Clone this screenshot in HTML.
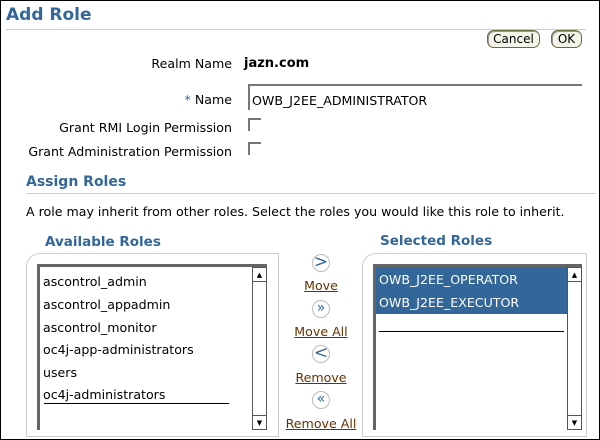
<!DOCTYPE html>
<html><head><style>
*{margin:0;padding:0;box-sizing:border-box}
body{width:600px;height:440px;overflow:hidden;background:#fff;font-family:"DejaVu Sans",sans-serif;font-size:12.6px;color:#000;position:relative}
.frame{position:absolute;left:0;top:0;width:600px;height:440px;border:1px solid #000}
.a{position:absolute;white-space:nowrap}
.h{color:#336699;font-weight:bold}
.lbl{position:absolute;right:368px;white-space:nowrap}
.btn{position:absolute;top:30px;height:18px;border:1px solid #6b6b3a;border-radius:7px;background:#f4f4ea;font-size:12px;line-height:16px;text-align:center;box-shadow:1px 1px 0 #999 inset}
.cb{position:absolute;left:248px;width:13px;height:13px;border-top:2px solid #777;border-left:2px solid #777}
.box{position:absolute;top:253px;height:184px;border:1px solid #ccc;border-top-left-radius:14px}
.lb{position:absolute;top:264px;height:166px;border-top:3px solid #666;border-left:3px solid #666;background:#fff}
.sb{position:absolute;top:0;right:0;width:15px;height:163px;border:1px solid #555;background:#fff}
.sb .u,.sb .d{position:absolute;left:0;width:13px;height:14px;font-size:7px;text-align:center;line-height:14px}
.sb .u{top:0;border-bottom:1px solid #555}
.sb .d{bottom:0;border-top:1px solid #555}
.it{position:absolute;left:3px}
.ic{position:absolute;left:312px;width:18px;height:18px;border:1px solid #bbb;border-radius:50%;color:#336699;font-size:17px;line-height:15px;text-align:center;background:#fff}
.lk{position:absolute;color:#663300;text-decoration:underline;width:100px;left:271px;text-align:center}
</style></head><body>
<div class="frame"></div>
<div class="a h" style="left:6px;top:5px;font-size:17px">Add Role</div>
<div class="a" style="left:6px;top:29px;width:580px;height:1px;background:#ccc"></div>
<div class="btn" style="left:487px;width:53px">Cancel</div>
<div class="btn" style="left:551px;width:31px">OK</div>
<div class="lbl" style="top:56px">Realm Name</div>
<div class="a" style="left:244px;top:56px;font-weight:bold;font-size:13px">jazn.com</div>
<div class="lbl" style="top:92px"><span style="color:#336699">*</span> Name</div>
<div class="a" style="left:248px;top:84px;width:334px;height:26px;border-top:2px solid #777;border-left:2px solid #777;padding:7px 0 0 2px">OWB_J2EE_ADMINISTRATOR</div>
<div class="lbl" style="top:120px">Grant RMI Login Permission</div>
<div class="cb" style="top:118px"></div>
<div class="lbl" style="top:144px">Grant Administration Permission</div>
<div class="cb" style="top:142px"></div>
<div class="a h" style="left:26px;top:174px;font-size:14px">Assign Roles</div>
<div class="a" style="left:26px;top:193px;width:570px;height:1px;background:#ccc"></div>
<div class="a" style="left:26px;top:204px">A role may inherit from other roles. Select the roles you would like this role to inherit.</div>
<div class="a h" style="left:45px;top:234px;font-size:13.5px">Available Roles</div>
<div class="a h" style="left:380px;top:233px;font-size:13.5px">Selected Roles</div>
<div class="box" style="left:26px;width:253px"></div>
<div class="lb" style="left:37px;width:230px">
<div class="it" style="top:7px">ascontrol_admin</div>
<div class="it" style="top:30px">ascontrol_appadmin</div>
<div class="it" style="top:53px">ascontrol_monitor</div>
<div class="it" style="top:75px">oc4j-app-administrators</div>
<div class="it" style="top:98px">users</div>
<div class="it" style="top:120px">oc4j-administrators</div>
<div class="a" style="left:4px;top:136px;width:185px;height:1px;background:#000"></div>
<div class="sb"><div class="u">▲</div><div class="d">▼</div></div>
</div>
<div class="box" style="left:362px;width:225px"></div>
<div class="lb" style="left:373px;width:209px">
<div class="a" style="left:0;top:0;width:191px;height:47px;background:#336699"></div>
<div class="it" style="top:5px;color:#fff">OWB_J2EE_OPERATOR</div>
<div class="it" style="top:28px;color:#fff">OWB_J2EE_EXECUTOR</div>
<div class="a" style="left:3px;top:64px;width:185px;height:1px;background:#000"></div>
<div class="sb"><div class="u">▲</div><div class="d">▼</div></div>
</div>
<div class="ic" style="top:254px">&gt;</div>
<div class="lk" style="top:278px">Move</div>
<div class="ic" style="top:300px;font-size:14px">&raquo;</div>
<div class="lk" style="top:324px">Move All</div>
<div class="ic" style="top:345px">&lt;</div>
<div class="lk" style="top:370px">Remove</div>
<div class="ic" style="top:391px;font-size:14px">&laquo;</div>
<div class="lk" style="top:416px">Remove All</div>
</body></html>
